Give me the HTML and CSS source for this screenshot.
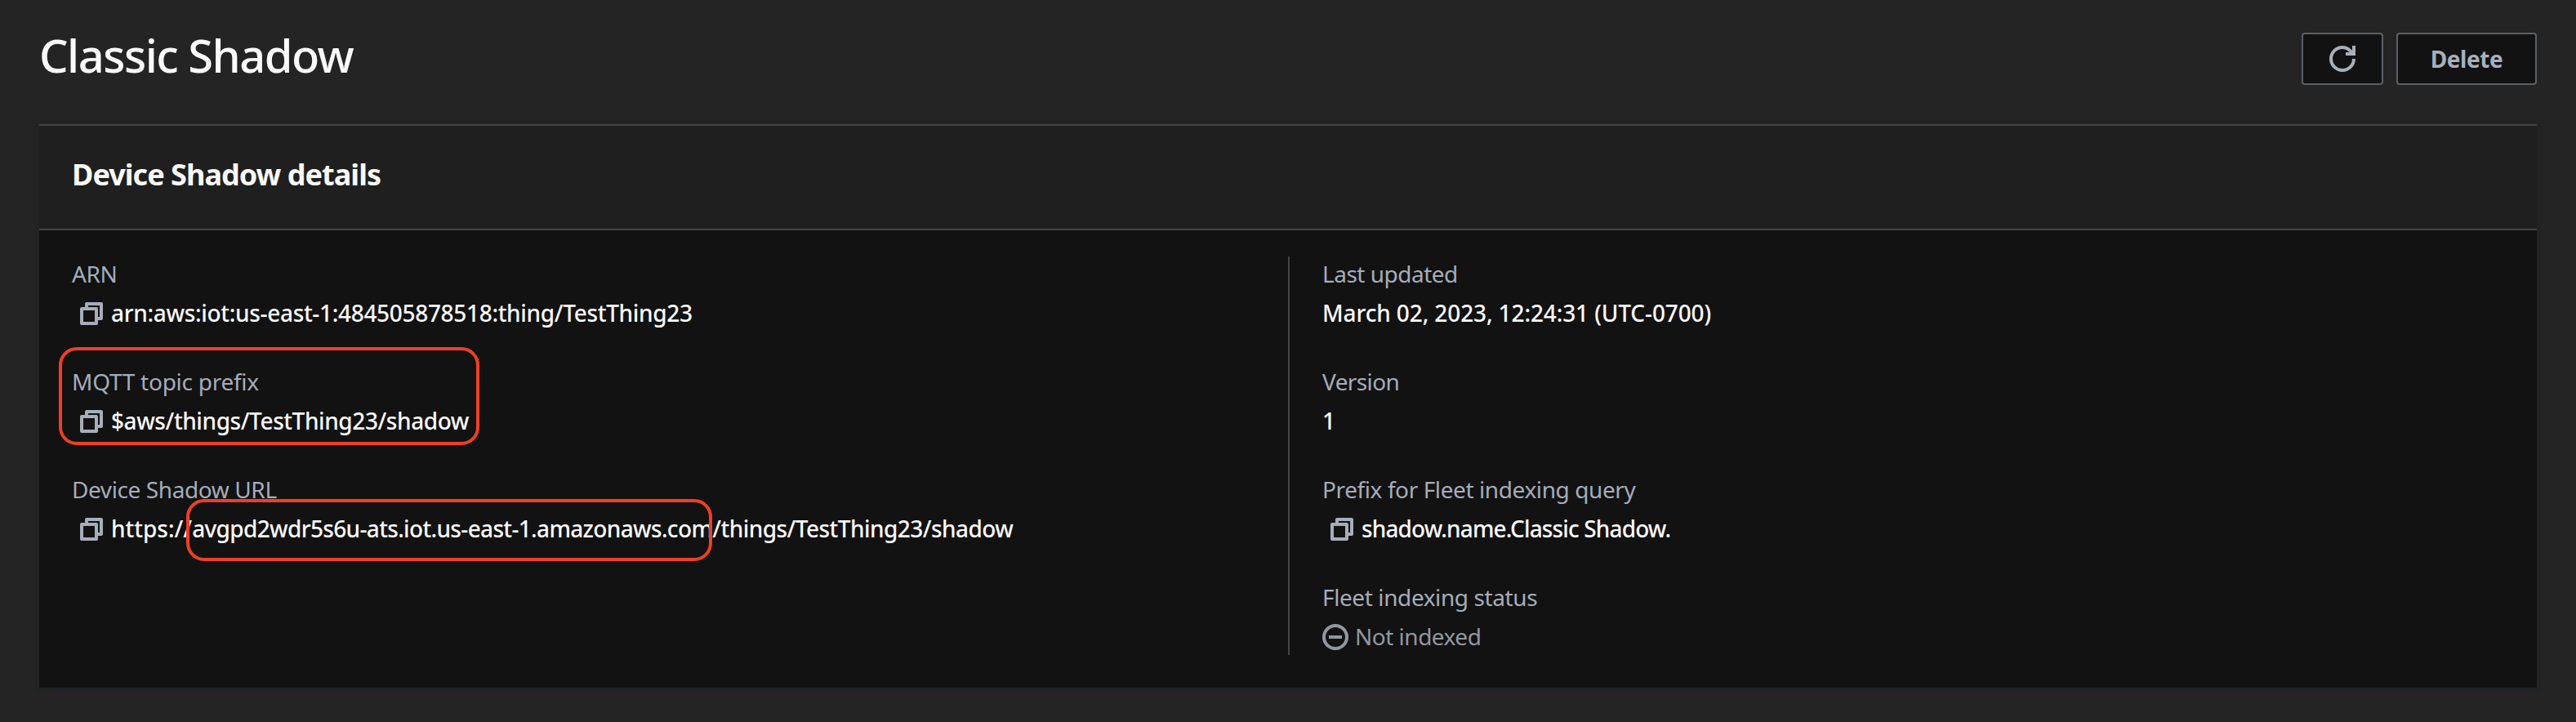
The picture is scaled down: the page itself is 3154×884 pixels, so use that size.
FILE: index.html
```html
<!DOCTYPE html>
<html lang="en">
<head>
<meta charset="utf-8">
<title>Classic Shadow</title>
<link rel="stylesheet" href="styles.css">
</head>
<body>
<svg class="sprite" aria-hidden="true">
  <symbol id="copy" viewBox="0 0 28 28">
    <path d="M8 8V2H26V20H22M2 8H20V26H2Z" fill="none" stroke="currentColor" stroke-width="4" stroke-linejoin="round"/>
  </symbol>
</svg>
<main class="page">
  <header class="page-header">
    <h1 class="title">Classic Shadow</h1>
    <div class="actions">
      <button class="button button-icon" aria-label="Refresh">
        <svg class="refresh" viewBox="0 0 32 32" fill="none" stroke="currentColor" stroke-width="4">
          <path d="M30 16A14 14 0 1 1 16 2C21.500 2 25.500 5 28.500 10"/>
          <path d="M20 10H30V0"/>
        </svg>
      </button>
      <button class="button button-delete">Delete</button>
    </div>
  </header>
  <section class="panel">
    <header class="panel-header"><h2 class="panel-title">Device Shadow details</h2></header>
    <div class="columns">
      <dl class="column">
        <div class="field">
          <dt class="label">ARN</dt>
          <dd class="value"><svg class="copy"><use href="#copy"/></svg><span class="arn">arn:aws:iot:us-east-1:484505878518:thing/TestThing23</span></dd>
        </div>
        <div class="field">
          <dt class="label topic-label">MQTT topic prefix</dt>
          <dd class="value"><svg class="copy"><use href="#copy"/></svg><span class="topic">$aws/things/TestThing23/shadow</span></dd>
          <span class="callout callout-topic"></span>
        </div>
        <div class="field">
          <dt class="label url-label">Device Shadow URL</dt>
          <dd class="value"><svg class="copy"><use href="#copy"/></svg><span class="url">https://<span class="host">avgpd2wdr5s6u-ats.iot.us-east-1.amazonaws.com</span><span class="path">/things/TestThing23/shadow</span></span></dd>
          <span class="callout callout-host"></span>
        </div>
      </dl>
      <dl class="column column-split">
        <div class="field">
          <dt class="label updated-label">Last updated</dt>
          <dd class="value updated">March 02, 2023, 12:24:31 (UTC-0700)</dd>
        </div>
        <div class="field">
          <dt class="label version-label">Version</dt>
          <dd class="value">1</dd>
        </div>
        <div class="field">
          <dt class="label">Prefix for Fleet indexing query</dt>
          <dd class="value"><svg class="copy"><use href="#copy"/></svg><span class="prefix">shadow.name.Classic Shadow.</span></dd>
        </div>
        <div class="field">
          <dt class="label">Fleet indexing status</dt>
          <dd class="value status">
            <svg class="status-icon" viewBox="0 0 32 32" fill="none" stroke="currentColor" stroke-width="4"><circle cx="16" cy="16" r="14"/><path d="M8 16H24"/></svg>
            <span>Not indexed</span>
          </dd>
        </div>
      </dl>
    </div>
  </section>
</main>
</body>
</html>
```
FILE: styles.css
```css
* { box-sizing: border-box; }

body {
  margin: 0;
  min-height: 884px;
  background: #242424;
  color: #fafafa;
  font-family: "Noto Sans", "Open Sans", sans-serif;
  font-size: 28px;
  line-height: 44px;
}

.sprite { position: absolute; width: 0; height: 0; }

.page { padding: 0 48px; }

.page-header {
  display: flex;
  justify-content: space-between;
  align-items: flex-start;
  height: 152px;
  padding-top: 40px;
}

.title {
  margin: -13px 0 0;
  font-size: 56px;
  line-height: 80px;
  font-weight: 500;
  letter-spacing: -1.5px;
}

.actions { display: flex; gap: 16px; }

.button {
  display: flex;
  align-items: center;
  justify-content: center;
  height: 64px;
  padding: 0;
  border: 2px solid #5b6166;
  border-radius: 4px;
  background: #121212;
  color: #a9b0bc;
  font: 700 28px/40px "Noto Sans", "Open Sans", sans-serif;
}

.button-icon { width: 100px; }
.button-delete { width: 172px; letter-spacing: -0.4px; }
.refresh { width: 32px; height: 32px; }

.panel {
  border-top: 2px solid #444;
  background: #121212;
  box-shadow: 0 2px 4px #16232b99;
}

.panel-header {
  height: 128px;
  padding: 38px 40px;
  border-bottom: 2px solid #444;
  background: #1f1f1f;
}

.panel-title {
  margin: 0;
  font-size: 36px;
  line-height: 44px;
  font-weight: 700;
  letter-spacing: -0.97px;
}

.columns {
  display: grid;
  grid-template-columns: 1529px 1fr;
  padding: 32px 0 40px;
}

.column {
  display: flex;
  flex-direction: column;
  gap: 40px;
  margin: 0;
  padding-left: 40px;
}

.column-split { border-left: 2px solid #444; }

.field { position: relative; white-space: nowrap; }

.label { height: 44px; line-height: 42px; color: #a6adba; letter-spacing: -0.4px; }

.value {
  display: flex;
  height: 44px;
  margin: 4px 0 0;
  line-height: 42px;
  font-weight: 500;
}

.copy { flex: none; width: 28px; height: 28px; margin: 8px 10px 0; color: #a6adba; }

.topic-label { letter-spacing: -0.26px; }
.url-label { letter-spacing: -0.4px; }
.updated-label { letter-spacing: -0.5px; }
.version-label { letter-spacing: -0.6px; }
.arn { letter-spacing: -0.32px; }
.topic { letter-spacing: -0.42px; }
.host { letter-spacing: -0.66px; }
.path { letter-spacing: -0.55px; }
.updated { letter-spacing: -0.12px; }
.prefix { letter-spacing: -0.87px; }

.status { gap: 8px; color: #92989f; font-weight: 400; letter-spacing: -0.5px; }
.status-icon { width: 32px; height: 32px; margin: 6px 0 0; }

/* Highlight outlines drawn over the fields */
.callout { position: absolute; border: 4px solid #ee4024; border-radius: 22px; }
.callout-topic { left: -16px; top: -21px; width: 515px; height: 120px; }
.callout-host { left: 140px; top: 33px; width: 644px; height: 76px; }
```
